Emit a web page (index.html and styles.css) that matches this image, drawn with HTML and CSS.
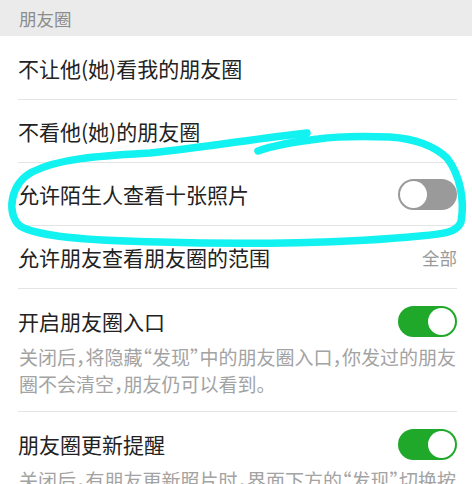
FILE: index.html
```html
<!DOCTYPE html>
<html lang="zh-CN">
<head>
<meta charset="utf-8">
<title>朋友圈</title>
<link rel="stylesheet" href="styles.css">
</head>
<body>
<div class="page">
  <div class="section-header">朋友圈</div>
  <div class="list">
    <div class="row first">
      <span class="title">不让他(她)看我的朋友圈</span>
    </div>
    <div class="row">
      <span class="title">不看他(她)的朋友圈</span>
    </div>
    <div class="row">
      <span class="title">允许陌生人查看十张照片</span>
      <span class="switch off"><span class="knob"></span></span>
    </div>
    <div class="row">
      <span class="title">允许朋友查看朋友圈的范围</span>
      <span class="value">全部</span>
    </div>
    <div class="row tall">
      <div class="row-head">
        <span class="title">开启朋友圈入口</span>
        <span class="switch on"><span class="knob"></span></span>
      </div>
      <p class="desc">关闭后，将隐藏“发现”中的朋友圈入口，你发过的朋友圈不会清空，朋友仍可以看到。</p>
    </div>
    <div class="row tall">
      <div class="row-head">
        <span class="title">朋友圈更新提醒</span>
        <span class="switch on"><span class="knob"></span></span>
      </div>
      <p class="desc">关闭后，有朋友更新照片时，界面下方的“发现”切换按钮上不再出现红点提示。</p>
    </div>
  </div>
  <svg class="marker" width="472" height="484" viewBox="0 0 472 484" aria-hidden="true">
    <path d="M307,133 C260,138 200,148 150,153 C100,156 60,158 32,172 C10,184 6,214 20,226 C40,238 100,241 160,242 C250,245 350,243 420,236 C445,234 457,232 461,222 C465,200 460,175 447,158 C430,142 405,138 390,137 C360,136 332,137 318,139 C292,142 272,146 258,151" fill="none" stroke="#12f2f0" stroke-width="7.5" stroke-linecap="round" stroke-linejoin="round"/>
  </svg>
</div>
</body>
</html>
```
FILE: styles.css
```css
html, body {
  margin: 0;
  padding: 0;
  background: #ffffff;
}

body {
  font-family: "Noto Sans CJK SC", "Noto Sans", "DejaVu Sans", sans-serif;
  color: #1f1f1f;
  overflow: hidden;
}

.page {
  position: relative;
  width: 472px;
  height: 484px;
  overflow: hidden;
}

.section-header {
  height: 36px;
  background: #ebebeb;
  color: #8c8c8c;
  font-size: 17.5px;
  line-height: 38px;
  padding-left: 19px;
  box-sizing: border-box;
}

.list {
  display: flex;
  flex-direction: column;
}

.row {
  box-sizing: border-box;
  height: 63px;
  margin: 0 15px 0 18px;
  border-bottom: 1px solid #e4e4e4;
  display: flex;
  align-items: center;
  justify-content: space-between;
}

.row.first {
  height: 64px;
}

.row.tall {
  height: auto;
  display: block;
  padding-bottom: 14px;
}

.row-head {
  height: 64px;
  display: flex;
  align-items: center;
  justify-content: space-between;
}

.title {
  font-size: 21px;
  line-height: 30px;
  color: #222222;
}

.value {
  font-size: 17.5px;
  color: #9a9a9a;
}

.desc {
  margin: -10px -6px 0 1px;
  font-size: 19px;
  line-height: 27px;
  color: #a3a3a3;
  font-feature-settings: "halt" 1;
}

.switch {
  position: relative;
  width: 59px;
  height: 31px;
  border-radius: 16px;
  flex: none;
  box-sizing: border-box;
}

.switch .knob {
  position: absolute;
  top: 2px;
  width: 27px;
  height: 27px;
  border-radius: 50%;
  background: #ffffff;
}

.switch.off {
  background: #9a9a9a;
}

.switch.off .knob {
  left: 2px;
}

.switch.on {
  background: #1fa82a;
}

.switch.on .knob {
  right: 2px;
}

.marker {
  position: absolute;
  left: 0;
  top: 0;
  pointer-events: none;
}
```
